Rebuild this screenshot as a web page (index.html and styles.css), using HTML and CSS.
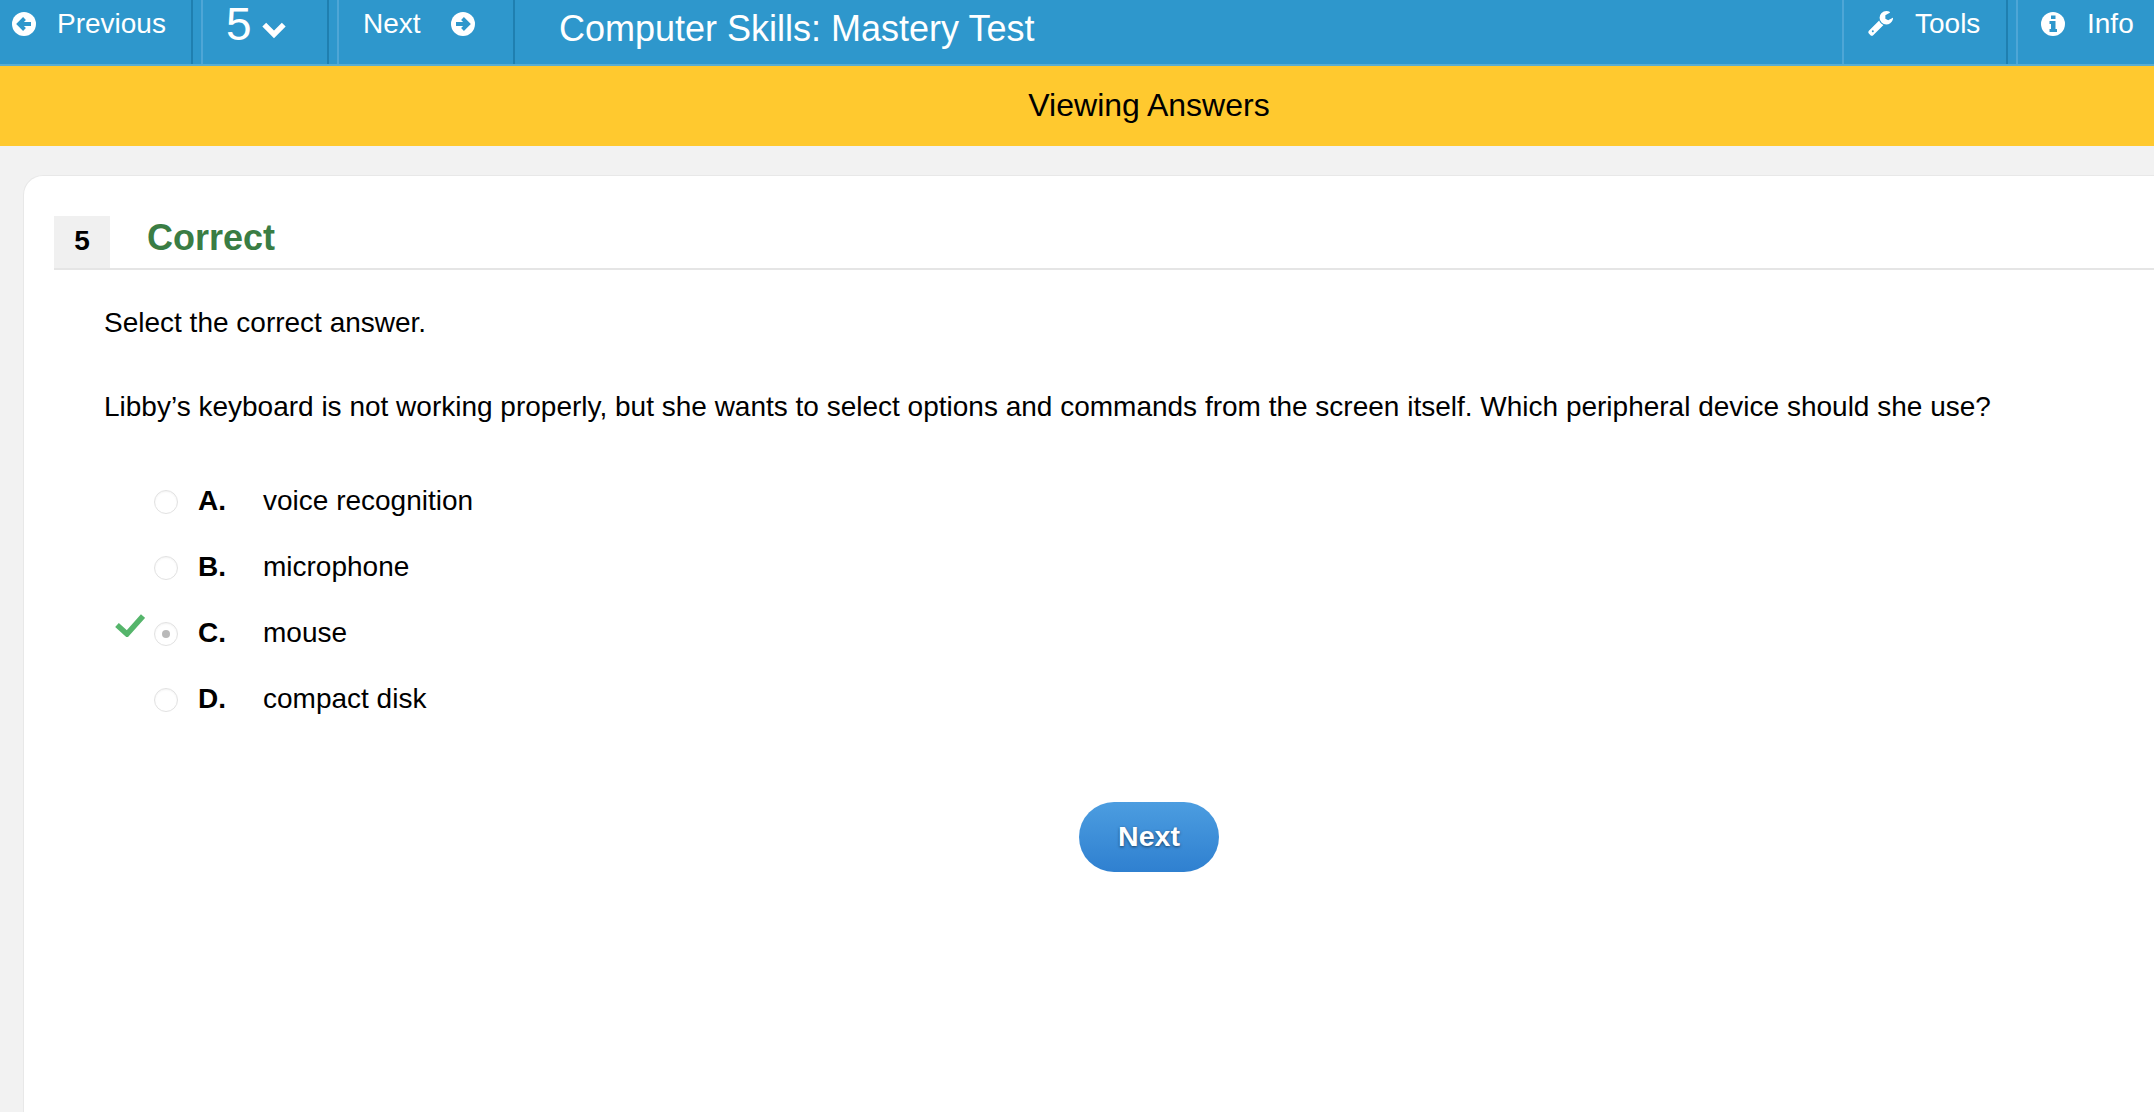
FILE: index.html
```html
<!DOCTYPE html>
<html lang="en">
<head>
<meta charset="utf-8">
<title>Computer Skills: Mastery Test</title>
<link rel="stylesheet" href="styles.css">
</head>
<body>
<header class="topbar">
  <a class="nav prev">
    <svg class="ico" viewBox="0 0 24 24"><circle cx="12" cy="12" r="12" fill="#fff"/><path d="M19 12H7M12.500 6.500 7 12l5.500 5.500" fill="none" stroke="#2e97cc" stroke-width="4"/></svg>
    <span>Previous</span>
  </a>
  <a class="nav num">
    <span class="big">5</span>
    <svg class="chev" viewBox="0 0 24 16"><path d="M3 3l9 9 9-9" fill="none" stroke="#fff" stroke-width="5"/></svg>
  </a>
  <a class="nav nxt">
    <span>Next</span>
    <svg class="ico" viewBox="0 0 24 24"><circle cx="12" cy="12" r="12" fill="#fff"/><path d="M5 12h12M11.500 6.500 17 12l-5.500 5.500" fill="none" stroke="#2e97cc" stroke-width="4"/></svg>
  </a>
  <h1 class="title">Computer Skills: Mastery Test</h1>
  <a class="nav tools">
    <svg class="ico wrench" viewBox="0 0 1792 1792"><path fill="#fff" d="M384 1344q0-26-19-45t-45-19-45 19-19 45 19 45 45 19 45-19 19-45zm644-420l-682 682q-37 37-90 37-52 0-91-37l-106-108q-38-36-38-90 0-53 38-91l681-681q39 98 114.500 173.500t173.500 114.500zm634-435q0 39-23 106-47 134-164.500 217.500t-258.500 83.500q-185 0-316.500-131.500t-131.500-316.500 131.500-316.500 316.500-131.500q58 0 121.500 16.500t107.500 46.500q16 11 16 28t-16 28l-293 169v224l193 107q5-3 79-48.500t135.500-81 70.500-35.500q15 0 23.500 10t8.500 25z"/></svg>
    <span>Tools</span>
  </a>
  <a class="nav info">
    <svg class="ico" viewBox="0 0 24 24"><circle cx="12" cy="12" r="12" fill="#fff"/><path fill="#2e97cc" d="M10 3.500h4.500v3.500H10zM8.500 9h6v8h1.500v3H8.500v-3H10v-5H8.500z"/></svg>
    <span>Info</span>
  </a>
</header>
<div class="banner">Viewing Answers</div>
<main class="card">
  <div class="qhead">
    <div class="qnum">5</div>
    <div class="status">Correct</div>
  </div>
  <div class="qbody">
    <p class="line">Select the correct answer.</p>
    <p class="line question">Libby’s keyboard is not working properly, but she wants to select options and commands from the screen itself. Which peripheral device should she use?</p>
    <ul class="options">
      <li class="opt"><span class="slot"></span><span class="radio"></span><b class="letter">A.</b><span>voice recognition</span></li>
      <li class="opt"><span class="slot"></span><span class="radio"></span><b class="letter">B.</b><span>microphone</span></li>
      <li class="opt"><span class="slot"><svg class="check" viewBox="0 0 30 24"><path d="M2 12l10 9L28 3" fill="none" stroke="#55b56b" stroke-width="5.500"/></svg></span><span class="radio on"></span><b class="letter">C.</b><span>mouse</span></li>
      <li class="opt"><span class="slot"></span><span class="radio"></span><b class="letter">D.</b><span>compact disk</span></li>
    </ul>
  </div>
  <div class="actions"><button class="btn">Next</button></div>
</main>
</body>
</html>
```
FILE: styles.css
```css
* { box-sizing: border-box; }
html, body { height: 100%; }
body {
  display: flex;
  flex-direction: column;
  margin: 0;
  overflow: hidden;
  background: #f2f2f2;
  color: #000;
  font-family: "Liberation Sans", Arial, sans-serif;
  font-size: 28px;
}
.topbar {
  display: flex;
  align-items: stretch;
  flex: none;
  height: 66px;
  background: #2e97cc;
  border-bottom: 2px solid #5aadcf;
  color: #fff;
}
.nav {
  display: flex;
  align-items: center;
  flex: none;
  font-size: 28px;
  padding-bottom: 16px;
  border-right: 2px solid #1f7fb0;
  border-left: 2px solid #4ea6d6;
}
.ico { width: 24px; height: 24px; flex: none; }
.wrench { width: 27px; height: 27px; }
.prev { width: 193px; border-left: 0; padding-left: 12px; gap: 21px; margin-right: 8px; }
.num { width: 128px; padding-left: 23px; gap: 9px; margin-right: 8px; }
.big { font-size: 46px; line-height: 1; }
.chev { width: 26px; height: 18px; margin-top: 12px; }
.nxt { width: 178px; padding-left: 24px; gap: 30px; }
.title {
  flex: 1;
  margin: 0;
  padding: 7px 0 0 44px;
  font-size: 36px;
  font-weight: 400;
  line-height: 44px;
}
.tools { width: 166px; padding-left: 24px; gap: 20px; margin-right: 8px; }
.info { width: 138px; padding-left: 23px; gap: 22px; border-right: 0; }
.banner {
  flex: none;
  height: 80px;
  padding-left: 144px;
  background: #ffc92f;
  font-size: 32px;
  line-height: 78px;
  text-align: center;
}
.card {
  flex: 1;
  margin: 29px 0 0 23px;
  padding: 40px 0 0 30px;
  background: #fff;
  border: 1px solid #e8e8e8;
  border-width: 1px 0 0 1px;
  border-radius: 20px 0 0 0;
}
.qhead {
  display: flex;
  align-items: stretch;
  height: 54px;
  border-bottom: 2px solid #e5e5e5;
}
.qnum {
  width: 56px;
  background: #f0f0f0;
  font-weight: 700;
  font-size: 28px;
  line-height: 50px;
  text-align: center;
}
.status {
  margin-left: 37px;
  color: #3a7d44;
  font-size: 36px;
  font-weight: 700;
  line-height: 44px;
}
.qbody { padding: 33px 0 0 50px; }
.line { margin: 0; line-height: 40px; }
.question { margin-top: 44px; }
.options { list-style: none; margin: 41px 0 0; padding: 0; }
.opt { display: flex; align-items: center; height: 66px; }
.slot { width: 50px; display: flex; flex: none; padding: 0 0 16px 11px; }
.check { width: 30px; height: 24px; }
.radio {
  width: 24px;
  height: 24px;
  flex: none;
  margin: 2px 20px 0 0;
  background: #fff;
  border: 1px solid #e2e2e2;
  border-radius: 50%;
  box-shadow: inset 0 1px 2px rgba(0, 0, 0, .05);
  display: flex;
  align-items: center;
  justify-content: center;
}
.radio.on::after {
  content: "";
  width: 8px;
  height: 8px;
  border-radius: 50%;
  background: #b9b9b9;
}
.letter { width: 65px; flex: none; }
.actions { display: flex; justify-content: center; margin-top: 70px; padding-left: 90px; }
.btn {
  width: 140px;
  height: 70px;
  padding: 0 0 2px;
  border: 0;
  border-radius: 35px;
  background: linear-gradient(#4c9de0, #2f80d0);
  color: #fff;
  font: 700 28.500px "Liberation Sans", Arial, sans-serif;
  text-shadow: 0 1px 3px rgba(0, 0, 0, .55);
}
```
